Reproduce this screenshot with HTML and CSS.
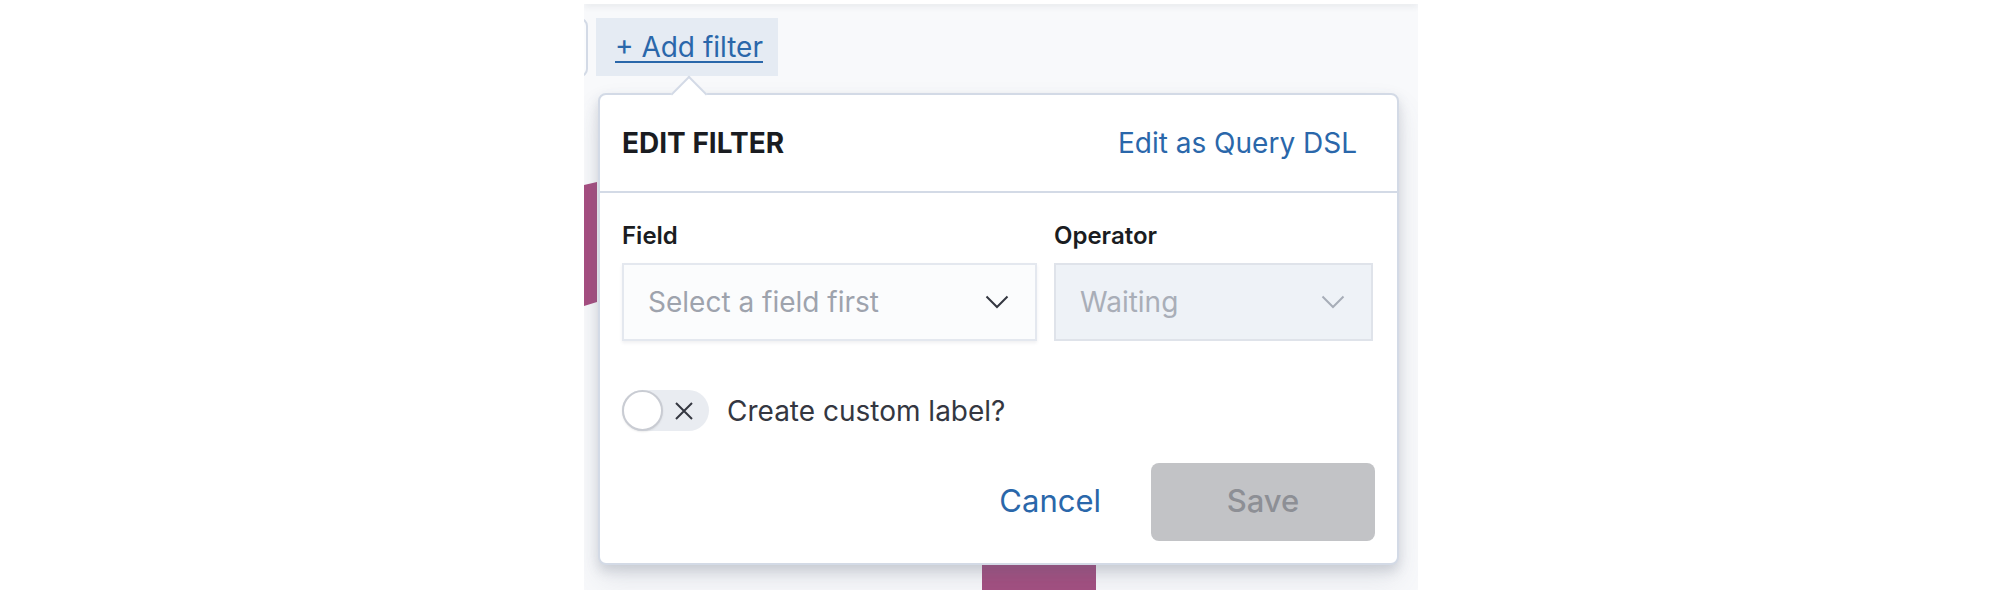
FILE: index.html
```html
<!DOCTYPE html>
<html>
<head>
<meta charset="utf-8">
<link rel="stylesheet" href="styles.css">
</head>
<body>
<div class="stage">
  <div class="topbar"></div>
  <div class="query-edge"></div>
  <div class="chart-slice"></div>
  <div class="chart-bar"></div>
  <div class="filter-row">
    <a class="add-filter" href="#">+ Add filter</a>
  </div>
  <div class="popover">
    <div class="arrow"></div>
    <div class="pop-header">
      <h2 class="pop-title">EDIT FILTER</h2>
      <a class="link" href="#">Edit as Query DSL</a>
    </div>
    <div class="pop-body">
      <div class="fields">
        <div class="form-row">
          <label class="form-label">Field</label>
          <div class="select">
            <span class="placeholder">Select a field first</span>
            <svg class="chev" width="24" height="14" viewBox="0 0 24 14"><path d="M1.5 1.5 L12 12 L22.5 1.5" fill="none" stroke="#343741" stroke-width="2"/></svg>
          </div>
        </div>
        <div class="form-row">
          <label class="form-label">Operator</label>
          <div class="select disabled">
            <span class="placeholder">Waiting</span>
            <svg class="chev" width="24" height="14" viewBox="0 0 24 14"><path d="M1.5 1.5 L12 12 L22.5 1.5" fill="none" stroke="#a7adb8" stroke-width="2"/></svg>
          </div>
        </div>
      </div>
      <div class="switch-row">
        <div class="switch">
          <span class="knob"></span>
          <svg class="cross" width="20" height="20" viewBox="0 0 20 20"><path d="M2 2 L18 18 M18 2 L2 18" stroke="#343741" stroke-width="2"/></svg>
        </div>
        <span class="switch-label">Create custom label?</span>
      </div>
      <div class="footer">
        <a class="cancel" href="#">Cancel</a>
        <button class="save" disabled>Save</button>
      </div>
    </div>
  </div>
</div>
</body>
</html>
```
FILE: styles.css
```css
* { box-sizing: border-box; }
html, body { margin: 0; padding: 0; background: #ffffff; }
body { font-family: Inter, "Noto Sans", sans-serif; }

.stage {
  position: relative;
  margin-left: 584px;
  width: 834px;
  height: 590px;
  overflow: hidden;
  background: #f8f9fb;
}
.topbar {
  height: 4px;
  background: #ffffff;
  box-shadow: 0 2px 6px rgba(60, 70, 90, 0.12);
  position: relative;
  z-index: 2;
}
.query-edge {
  position: absolute;
  left: -24px;
  top: 18px;
  width: 28px;
  height: 59px;
  border: 2px solid #d3dae6;
  border-radius: 8px;
  background: #fbfcfd;
}
.chart-slice {
  position: absolute;
  left: 0;
  top: 182px;
  width: 13px;
  height: 124px;
  background: #a64e81;
  clip-path: polygon(0 3px, 100% 0, 100% calc(100% - 4px), 0 100%);
}
.chart-bar {
  position: absolute;
  left: 398px;
  top: 555px;
  width: 114px;
  height: 40px;
  background: #a34f80;
}
.filter-row {
  padding: 14px 0 0 12px;
  height: 72px;
}
.add-filter {
  display: inline-flex;
  align-items: center;
  height: 58px;
  padding: 0 15px 0 19px;
  background: #e5ebf3;
  color: #2a67aa;
  font-size: 28px;
  text-decoration: underline;
  text-decoration-thickness: 2px;
  text-underline-offset: 4px;
}

.popover {
  position: relative;
  z-index: 3;
  margin: 17px 0 0 14px;
  width: 801px;
  background: #ffffff;
  border: 2px solid #d3dae6;
  border-radius: 8px;
  box-shadow: 0 6px 12px rgba(90, 100, 120, 0.22), 0 16px 30px rgba(90, 100, 120, 0.12);
}
.arrow {
  position: absolute;
  left: 76px;
  top: -14px;
  width: 26px;
  height: 26px;
  background: #ffffff;
  border-top: 2px solid #d3dae6;
  border-left: 2px solid #d3dae6;
  transform: rotate(45deg);
}
.pop-header {
  position: relative;
  display: flex;
  align-items: center;
  justify-content: space-between;
  height: 98px;
  padding: 0 40px 0 22px;
  border-bottom: 2px solid #d3dae6;
}
.pop-title {
  margin: 0;
  font-size: 28px;
  font-weight: 700;
  color: #1a1c21;
  letter-spacing: 0;
}
.link {
  color: #2a67aa;
  font-size: 28px;
  text-decoration: none;
}
.pop-body {
  padding: 24px 24px 22px 22px;
}
.fields {
  display: grid;
  grid-template-columns: 415fr 319fr;
  column-gap: 17px;
}
.form-label {
  display: block;
  height: 38px;
  line-height: 38px;
  margin-bottom: 8px;
  font-size: 24px;
  font-weight: 600;
  color: #1a1c21;
}
.select {
  display: flex;
  align-items: center;
  justify-content: space-between;
  height: 78px;
  padding: 0 26px 0 24px;
  background: #fbfcfd;
  border: 2px solid #e4e8ef;
  box-shadow: 0 2px 3px rgba(60, 70, 90, 0.08);
  font-size: 28px;
}
.select .placeholder { color: #9ea3ad; }
.select.disabled {
  background: #eef2f7;
  border-color: #dfe3ea;
  box-shadow: none;
}
.select.disabled .placeholder { color: #a9aeb8; }

.switch-row {
  display: flex;
  align-items: center;
  margin-top: 49px;
}
.switch {
  position: relative;
  display: flex;
  align-items: center;
  justify-content: flex-end;
  width: 87px;
  height: 41px;
  padding-right: 15px;
  background: #e9ecf1;
  border-radius: 21px;
}
.knob {
  position: absolute;
  left: 0;
  top: 0;
  width: 41px;
  height: 41px;
  border-radius: 50%;
  background: #ffffff;
  border: 2px solid #c9ccd3;
  box-shadow: 0 1px 2px rgba(0, 0, 0, 0.08);
}
.switch-label {
  margin-left: 18px;
  font-size: 28px;
  color: #343741;
}
.footer {
  display: flex;
  align-items: center;
  justify-content: flex-end;
  margin-top: 32px;
}
.cancel {
  color: #2a67aa;
  font-size: 31px;
  text-decoration: none;
  margin-right: 50px;
  padding-bottom: 4px;
}
.save {
  width: 224px;
  height: 78px;
  padding: 0 0 4px 0;
  border: none;
  border-radius: 8px;
  background: #c2c3c6;
  color: #8d8f95;
  font-family: Inter, "Noto Sans", sans-serif;
  font-size: 31px;
  font-weight: 500;
  margin-right: -2px;
}
```
